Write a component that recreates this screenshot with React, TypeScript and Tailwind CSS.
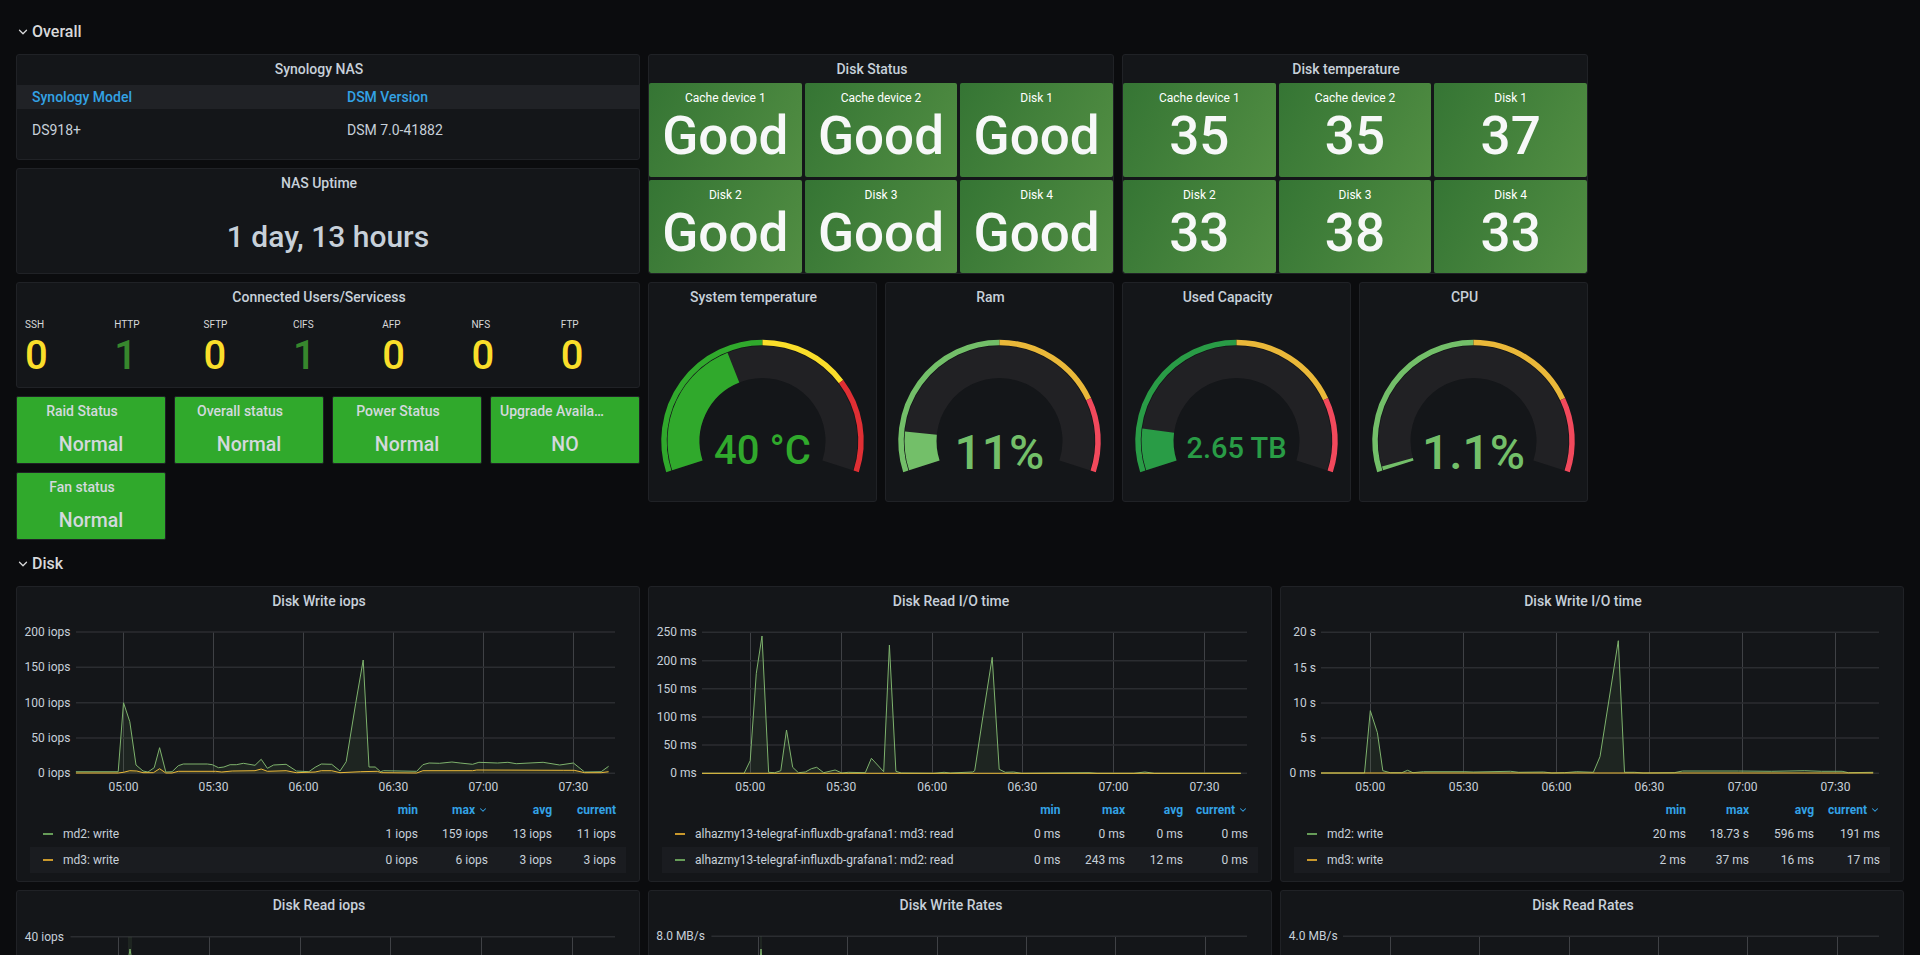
import React from 'react';
import { ChevronDown } from 'lucide-react';

type Pt = [number, number];

const polar = (cx: number, cy: number, r: number, f: number): Pt => {
  // f 0..1 sweeps 216deg, from lower left to lower right
  const a = ((-108 + 216 * f) * Math.PI) / 180;
  return [cx + r * Math.sin(a), cy - r * Math.cos(a)];
};

const arc = (cx: number, cy: number, r: number, f0: number, f1: number) => {
  const [x0, y0] = polar(cx, cy, r, f0);
  const [x1, y1] = polar(cx, cy, r, f1);
  const large = (f1 - f0) * 216 > 180 ? 1 : 0;
  return `M${x0} ${y0}A${r} ${r} 0 ${large} 1 ${x1} ${y1}`;
};

const Panel: React.FC<{ title?: string; className?: string; children?: React.ReactNode }> = ({ title, className, children }) => (
  <div className={`bg-[#141619] border border-[#202226] rounded-[3px] overflow-hidden flex flex-col ${className ?? ''}`}>
    {title && <div className="h-[28px] shrink-0 flex items-center justify-center pr-[18px] text-sm font-medium text-[#c7d0d9]">{title}</div>}
    {children}
  </div>
);

const RowHeader: React.FC<{ title: string; className: string }> = ({ title, className }) => (
  <div className={`col-span-full flex items-center pt-[2px] text-[#d8d9da] font-medium text-base ${className}`}>
    <ChevronDown size={14} strokeWidth={2.2} className="mr-[2px]" />
    {title}
  </div>
);

const Tile: React.FC<{ label: string; value: string }> = ({ label, value }) => (
  <div className="rounded-[2px] bg-[linear-gradient(120deg,#357534,#528e43)] flex flex-col items-center text-white">
    <div className="mt-[7px] text-xs leading-[16px]">{label}</div>
    <div className="text-[53px] leading-[60px] font-medium text-[#f7f8f8]">{value}</div>
  </div>
);

const TileGroup: React.FC<{ title: string; className: string; items: [string, string][] }> = ({ title, className, items }) => (
  <Panel title={title} className={className}>
    <div className="flex-1 grid grid-cols-3 grid-rows-2 gap-[3px]">
      {items.map(([label, value]) => (
        <Tile key={label} label={label} value={value} />
      ))}
    </div>
  </Panel>
);

const StatusCard: React.FC<{ title: string; value: string; className?: string; titleClass?: string }> = ({ title, value, className, titleClass }) => (
  <div className={`col-span-2 row-span-2 rounded-[2px] border border-[#202226] bg-[#30a92c] flex flex-col text-[#d3d9dd] ${className ?? ''}`}>
    <div className={`mt-[4px] text-sm leading-[20px] font-medium text-center truncate ${titleClass ?? 'pl-2 pr-[26px]'}`}>{title}</div>
    <div className="mt-[11px] text-[19.5px] leading-[26px] font-medium text-center">{value}</div>
  </div>
);

const services: [string, string, string][] = [
  ['SSH', '0', 'text-[#fade2a]'],
  ['HTTP', '1', 'text-[#37872d]'],
  ['SFTP', '0', 'text-[#fade2a]'],
  ['CIFS', '1', 'text-[#37872d]'],
  ['AFP', '0', 'text-[#fade2a]'],
  ['NFS', '0', 'text-[#fade2a]'],
  ['FTP', '0', 'text-[#fade2a]'],
];

type GaugeProps = {
  title: string;
  className: string;
  value: number;
  text: string;
  textClass: string;
  textY: number;
  color: string;
  bands: [string, number, number][];
};

const Gauge: React.FC<GaugeProps> = ({ title, className, value, text, textClass, textY, color, bands }) => (
  <Panel title={title} className={className}>
    <svg width={227} height={190} viewBox="0 0 227 190" className="block">
      <path d={arc(113.5, 130, 79, 0, 1)} fill="none" stroke="#212124" strokeWidth={32} />
      <path d={arc(113.5, 130, 79, 0, value)} fill="none" stroke={color} strokeWidth={32} />
      {bands.map(([c, f0, f1]) => (
        <path key={c} d={arc(113.5, 130, 98.5, f0, f1)} fill="none" stroke={c} strokeWidth={5.5} />
      ))}
      <text x={113.5} y={textY} textAnchor="middle" dominantBaseline="central" fill={color} fontWeight={500} className={textClass}>
        {text}
      </text>
    </svg>
  </Panel>
);

type Series = { color: string; pts: Pt[] };

type ChartProps = {
  x0: number;
  y0: number;
  height: number;
  left: number;
  right: number;
  labelRight: number;
  yTicks: [string, number][];
  xTicks: [string, number][];
  xLabelY?: number;
  series: Series[];
};

// all numbers below are in page pixels, the viewBox shifts them into the panel
const Chart: React.FC<ChartProps> = ({ x0, y0, height, left, right, labelRight, yTicks, xTicks, xLabelY, series }) => {
  const bottom = yTicks[yTicks.length - 1][1];
  const top = yTicks[0][1];
  const axisBottom = xLabelY ? bottom : y0 + height;
  return (
    <svg width={622} height={height} viewBox={`${x0} ${y0} 622 ${height}`} className="block shrink-0">
      {xTicks.map(([label, x]) => (
        <g key={label}>
          <line x1={Math.floor(x) + 0.5} x2={Math.floor(x) + 0.5} y1={top} y2={axisBottom} stroke="#3f4145" strokeWidth={1} />
          {xLabelY && (
            <text x={x} y={xLabelY} textAnchor="middle" dominantBaseline="central" fontSize={12} fill="#c7d0d9">
              {label}
            </text>
          )}
        </g>
      ))}
      {yTicks.map(([label, y]) => (
        <g key={label}>
          <line x1={left} x2={right} y1={y} y2={y} stroke="#2b2d31" strokeWidth={1.4} />
          <text x={labelRight} y={y} textAnchor="end" dominantBaseline="central" fontSize={12} fill="#c7d0d9">
            {label}
          </text>
        </g>
      ))}
      {series.map((s) => {
        const d = s.pts.map((p) => p.join(',')).join(' ');
        const first = s.pts[0][0];
        const last = s.pts[s.pts.length - 1][0];
        return (
          <g key={s.color}>
            <polygon points={`${first},${bottom} ${d} ${last},${bottom}`} fill={s.color} fillOpacity={0.1} />
            <polyline points={d} fill="none" stroke={s.color} strokeWidth={1} />
          </g>
        );
      })}
    </svg>
  );
};

type LegendRow = { color: string; name: string; values: string[] };

const Legend: React.FC<{ cols: string; sorted: number; rows: LegendRow[] }> = ({ cols, sorted, rows }) => (
  <div className="mx-[13px] text-xs">
    <div className={`grid ${cols} h-[23px] items-center font-bold text-[#33a2e5]`}>
      <div />
      {['min', 'max', 'avg', 'current'].map((h, i) => (
        <div key={h} className={`flex items-center justify-end ${i === 3 ? 'pr-[10px]' : ''}`}>
          {h}
          {i === sorted && <ChevronDown size={10} strokeWidth={2.5} className="ml-[3px]" />}
        </div>
      ))}
    </div>
    {rows.map((r, i) => (
      <div key={r.name} className={`grid ${cols} h-[26px] items-center text-[#c7d0d9] ${i === 1 ? 'bg-[#1a1c20]' : ''}`}>
        <div className="flex items-center pl-[13px] truncate">
          <span className="w-[10px] h-[2px] mr-[10px] shrink-0" style={{ backgroundColor: r.color }} />
          {r.name}
        </div>
        {r.values.map((v, j) => (
          <div key={j} className={`text-right ${j === 3 ? 'pr-[10px]' : ''}`}>
            {v}
          </div>
        ))}
      </div>
    ))}
  </div>
);

const GREEN = '#7eb26d';
const ORANGE = '#eab839';
const DASH_GREEN = '#669c58';
const DASH_ORANGE = '#c9982c';

const zoomed = (pts: Pt[], ox: number, sx: number, oy: number): Pt[] => pts.map(([x, y]) => [+(ox + x / sx).toFixed(1), +(oy + y / 3).toFixed(1)]);

const times = ['05:00', '05:30', '06:00', '06:30', '07:00', '07:30'];
const ticks = (xs: number[], ox: number, sx: number): [string, number][] => times.map((t, i) => [t, +(ox + xs[i] / sx).toFixed(1)]);

const md2Write = zoomed(
  [[183, 305], [285, 305], [298, 98], [313, 155], [328, 285], [345, 303], [357, 306], [372, 293], [385, 233], [400, 306], [415, 305], [430, 287], [442, 282], [500, 282], [512, 284], [527, 293], [540, 291], [555, 284], [570, 284], [587, 280], [615, 286], [630, 268], [645, 295], [660, 285], [690, 283], [715, 303], [745, 305], [760, 292], [775, 282], [800, 283], [820, 303], [835, 275], [858, 100], [876, -30], [890, 291], [905, 291], [918, 305], [925, 302], [1005, 304], [1020, 284], [1035, 279], [1060, 280], [1090, 276], [1110, 279], [1140, 283], [1155, 277], [1200, 279], [1225, 277], [1245, 281], [1310, 277], [1350, 285], [1383, 279], [1410, 306], [1450, 305], [1468, 289]],
  0, 2.412, 670,
);
const md3Write = zoomed(
  [[183, 309], [285, 309], [298, 307], [313, 302], [330, 303], [345, 308], [370, 308], [385, 296], [400, 309], [415, 309], [430, 304], [520, 304], [535, 306], [560, 303], [615, 302], [630, 297], [645, 304], [690, 302], [715, 308], [760, 306], [775, 302], [800, 302], [820, 308], [870, 305], [910, 304], [920, 308], [1005, 309], [1020, 302], [1140, 302], [1150, 300], [1360, 301], [1385, 301], [1410, 308], [1450, 308], [1468, 305]],
  0, 2.412, 670,
);
const md2Read = zoomed(
  [[152, 580], [255, 580], [270, 542], [285, 280], [299, 168], [315, 577], [330, 578], [345, 572], [359, 450], [374, 562], [388, 578], [405, 576], [420, 566], [433, 562], [450, 578], [478, 570], [495, 579], [510, 577], [552, 578], [567, 535], [597, 575], [611, 195], [627, 574], [640, 579], [720, 580], [745, 577], [760, 579], [815, 576], [820, 572], [840, 410], [863, 232], [880, 568], [895, 577], [915, 576], [935, 580], [1100, 578], [1120, 580], [1210, 580], [1237, 576], [1260, 580], [1472, 580]],
  640, 2.45, 580,
);
const md3Read = zoomed([[152, 580], [1472, 580]], 640, 2.45, 580);
const md2WriteTime = zoomed(
  [[123, 579], [228, 579], [242, 392], [259, 458], [272, 572], [290, 578], [318, 578], [332, 571], [345, 578], [370, 575], [470, 575], [490, 576], [580, 574], [600, 577], [660, 576], [680, 579], [710, 578], [740, 575], [780, 577], [796, 530], [840, 182], [855, 577], [880, 577], [900, 579], [975, 578], [995, 573], [1130, 573], [1210, 574], [1290, 572], [1330, 574], [1380, 574], [1395, 578], [1455, 577]],
  1270, 2.412, 580,
);
const md3WriteTime = zoomed([[123, 579], [1455, 579]], 1270, 2.412, 580);

const normalThresholds = (c: string): [string, number, number][] => [
  [c, 0, 0.5],
  ['#eab839', 0.5, 0.8],
  ['#f2495c', 0.8, 1],
];

export default function App() {
  return (
    <div className="h-screen overflow-hidden bg-[#0b0c0e] font-['Roboto',sans-serif]">
      <div className="grid grid-cols-[repeat(24,71px)] auto-rows-[30px] gap-2 p-4">
        <RowHeader title="Overall" className="row-start-1" />

        <Panel title="Synology NAS" className="col-start-1 col-span-8 row-start-2 row-span-3">
          <div className="h-[24px] mt-[2px] bg-[#202226] grid grid-cols-[315px_1fr] items-center pl-[15px] text-sm font-medium text-[#33a2e5]">
            <div>Synology Model</div>
            <div>DSM Version</div>
          </div>
          <div className="grid grid-cols-[315px_1fr] pl-[15px] mt-[12px] text-sm leading-[18px] text-[#c7d0d9]">
            <div>DS918+</div>
            <div>DSM 7.0-41882</div>
          </div>
        </Panel>

        <Panel title="NAS Uptime" className="col-start-1 col-span-8 row-start-5 row-span-3">
          <div className="flex-1 flex items-center justify-center pt-[2px] text-[30px] font-medium text-[#c7d0d9]">1 day, 13 hours</div>
        </Panel>

        <Panel title="Connected Users/Servicess" className="col-start-1 col-span-8 row-start-8 row-span-3">
          <div className="grid grid-cols-[repeat(7,89.3px)] pl-2 pt-[6px]">
            {services.map(([label, value, color]) => (
              <div key={label}>
                <div className="text-[10px] leading-[16px] text-[#d8d9da]">{label}</div>
                <div className={`text-[40px] leading-[46px] font-medium ${color}`}>{value}</div>
              </div>
            ))}
          </div>
        </Panel>

        <StatusCard title="Raid Status" value="Normal" className="col-start-1 row-start-11" />
        <StatusCard title="Overall status" value="Normal" className="col-start-3 row-start-11" />
        <StatusCard title="Power Status" value="Normal" className="col-start-5 row-start-11" />
        <StatusCard title="Upgrade Available" value="NO" className="col-start-7 row-start-11" titleClass="pl-[9px] pr-[34px] text-left" />
        <StatusCard title="Fan status" value="Normal" className="col-start-1 row-start-13" />

        <TileGroup
          title="Disk Status"
          className="col-start-9 col-span-6 row-start-2 row-span-6"
          items={[['Cache device 1', 'Good'], ['Cache device 2', 'Good'], ['Disk 1', 'Good'], ['Disk 2', 'Good'], ['Disk 3', 'Good'], ['Disk 4', 'Good']]}
        />
        <TileGroup
          title="Disk temperature"
          className="col-start-15 col-span-6 row-start-2 row-span-6"
          items={[['Cache device 1', '35'], ['Cache device 2', '35'], ['Disk 1', '37'], ['Disk 2', '33'], ['Disk 3', '38'], ['Disk 4', '33']]}
        />

        <Gauge
          title="System temperature"
          className="col-start-9 col-span-3 row-start-8 row-span-6"
          value={0.4}
          text="40 °C"
          textClass="text-[40px]"
          textY={139}
          color="#30a92c"
          bands={[['#30a92c', 0, 0.5], ['#fade2a', 0.5, 0.745], ['#e02f34', 0.745, 1]]}
        />
        <Gauge
          title="Ram"
          className="col-start-12 col-span-3 row-start-8 row-span-6"
          value={0.11}
          text="11%"
          textClass="text-[48px]"
          textY={141}
          color="#73bf69"
          bands={normalThresholds('#73bf69')}
        />
        <Gauge
          title="Used Capacity"
          className="col-start-15 col-span-3 row-start-8 row-span-6"
          value={0.118}
          text="2.65 TB"
          textClass="text-[29px]"
          textY={137}
          color="#299c46"
          bands={normalThresholds('#299c46')}
        />
        <Gauge
          title="CPU"
          className="col-start-18 col-span-3 row-start-8 row-span-6"
          value={0.011}
          text="1.1%"
          textClass="text-[48px]"
          textY={141}
          color="#73bf69"
          bands={normalThresholds('#73bf69')}
        />

        <RowHeader title="Disk" className="row-start-15" />

        <Panel title="Disk Write iops" className="col-start-1 col-span-8 row-start-16 row-span-8">
          <Chart
            x0={17}
            y0={615}
            height={183}
            left={76}
            right={615}
            labelRight={70.5}
            yTicks={[['200 iops', 632], ['150 iops', 667.3], ['100 iops', 702.7], ['50 iops', 738], ['0 iops', 773.3]]}
            xTicks={ticks([298, 515, 732, 949, 1166, 1383], 0, 2.412)}
            xLabelY={786.7}
            series={[{ color: GREEN, pts: md2Write }, { color: ORANGE, pts: md3Write }]}
          />
          <Legend
            cols="grid-cols-[minmax(0,1fr)_60px_70px_64px_74px]"
            sorted={1}
            rows={[
              { color: DASH_GREEN, name: 'md2: write', values: ['1 iops', '159 iops', '13 iops', '11 iops'] },
              { color: DASH_ORANGE, name: 'md3: write', values: ['0 iops', '6 iops', '3 iops', '3 iops'] },
            ]}
          />
        </Panel>

        <Panel title="Disk Read I/O time" className="col-start-9 col-span-8 row-start-16 row-span-8">
          <Chart
            x0={649}
            y0={615}
            height={183}
            left={702}
            right={1247}
            labelRight={696.7}
            yTicks={[['250 ms', 632.3], ['200 ms', 660.7], ['150 ms', 688.7], ['100 ms', 717], ['50 ms', 745], ['0 ms', 773.3]]}
            xTicks={ticks([270, 493, 716, 937, 1160, 1383], 640, 2.45)}
            xLabelY={786.7}
            series={[{ color: GREEN, pts: md2Read }, { color: ORANGE, pts: md3Read }]}
          />
          <Legend
            cols="grid-cols-[minmax(0,1fr)_60px_64.5px_58px_75px]"
            sorted={3}
            rows={[
              { color: DASH_ORANGE, name: 'alhazmy13-telegraf-influxdb-grafana1: md3: read', values: ['0 ms', '0 ms', '0 ms', '0 ms'] },
              { color: DASH_GREEN, name: 'alhazmy13-telegraf-influxdb-grafana1: md2: read', values: ['0 ms', '243 ms', '12 ms', '0 ms'] },
            ]}
          />
        </Panel>

        <Panel title="Disk Write I/O time" className="col-start-17 col-span-8 row-start-16 row-span-8">
          <Chart
            x0={1281}
            y0={615}
            height={183}
            left={1321}
            right={1879}
            labelRight={1316}
            yTicks={[['20 s', 632.3], ['15 s', 667.7], ['10 s', 703], ['5 s', 738], ['0 ms', 773.3]]}
            xTicks={ticks([242, 467, 691, 915, 1140, 1364], 1270, 2.412)}
            xLabelY={786.7}
            series={[{ color: GREEN, pts: md2WriteTime }, { color: ORANGE, pts: md3WriteTime }]}
          />
          <Legend
            cols="grid-cols-[minmax(0,1fr)_60px_63px_65px_76px]"
            sorted={3}
            rows={[
              { color: DASH_GREEN, name: 'md2: write', values: ['20 ms', '18.73 s', '596 ms', '191 ms'] },
              { color: DASH_ORANGE, name: 'md3: write', values: ['2 ms', '37 ms', '16 ms', '17 ms'] },
            ]}
          />
        </Panel>

        <Panel title="Disk Read iops" className="col-start-1 col-span-8 row-start-24 row-span-8">
          <Chart
            x0={17}
            y0={919}
            height={40}
            left={70.5}
            right={615}
            labelRight={64}
            yTicks={[['40 iops', 936.7]]}
            xTicks={ticks([286, 505, 725, 942, 1161, 1381], 0, 2.412)}
            series={[{ color: GREEN, pts: [[128, 962], [130, 949], [132, 962]] }]}
          />
        </Panel>

        <Panel title="Disk Write Rates" className="col-start-9 col-span-8 row-start-24 row-span-8">
          <Chart
            x0={649}
            y0={919}
            height={40}
            left={711.4}
            right={1247}
            labelRight={705}
            yTicks={[['8.0 MB/s', 936.3]]}
            xTicks={ticks([290, 508, 729, 947, 1165, 1385], 640, 2.45)}
            series={[{ color: GREEN, pts: [[760, 962], [761, 949], [762, 962]] }]}
          />
        </Panel>

        <Panel title="Disk Read Rates" className="col-start-17 col-span-8 row-start-24 row-span-8">
          <Chart
            x0={1281}
            y0={919}
            height={40}
            left={1343}
            right={1879}
            labelRight={1337.6}
            yTicks={[['4.0 MB/s', 936.3]]}
            xTicks={ticks([290, 505, 722, 937, 1152, 1368], 1270, 2.412)}
            series={[]}
          />
        </Panel>
      </div>
    </div>
  );
}
